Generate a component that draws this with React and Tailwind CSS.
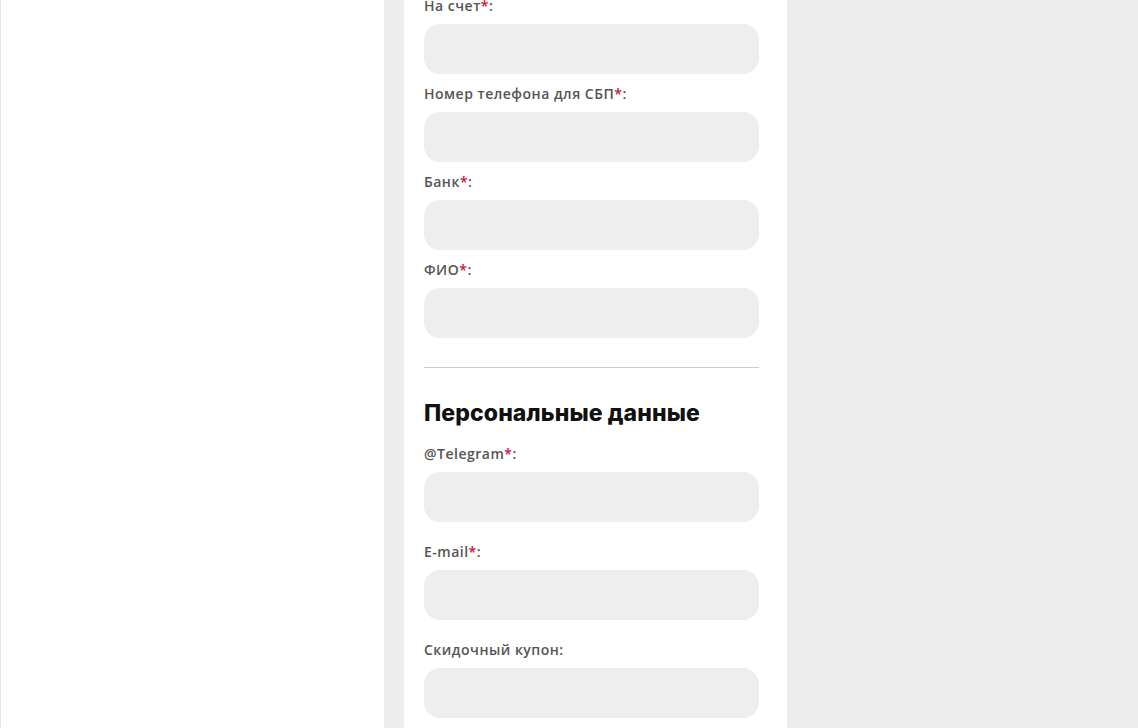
const bankFields = [
  { label: "На счет", required: true },
  { label: "Номер телефона для СБП", required: true },
  { label: "Банк", required: true },
  { label: "ФИО", required: true },
]

const personalFields = [
  { label: "@Telegram", required: true },
  { label: "E-mail", required: true },
  { label: "Скидочный купон", required: false },
]

function Field({ label, required, className = "" }) {
  return (
    <div className={`flex flex-col ${className}`}>
      <label className="mb-2 font-['Open_Sans','Noto_Sans',sans-serif] text-[14px] leading-[20px] font-semibold tracking-[0.5px] text-[#555555]">
        {label}
        {required ? <span className="text-[#d0103a]">*</span> : null}:
      </label>
      <input
        type="text"
        className="h-[50px] w-full rounded-[16px] bg-[#eeeeee] px-4 text-[15px] outline-none"
      />
    </div>
  )
}

export default function App() {
  return (
    <div className="flex h-[728px] w-[1138px] overflow-hidden bg-[#ededed] font-['Inter','Noto_Sans',sans-serif]">
      <aside className="h-full w-[384px] shrink-0 border-l border-[#e6e6e6] bg-white" />

      <main className="ml-[20px] h-full w-[383px] shrink-0 overflow-hidden bg-white pl-[20px] pr-[28px]">
        <div className="-mt-[4px] flex flex-col">
          <div className="flex flex-col gap-[10px]">
            {bankFields.map((f) => (
              <Field key={f.label} label={f.label} required={f.required} />
            ))}
          </div>

          <hr className="mt-[29px] border-0 border-t border-[#cccccc]" />

          <h2 className="mt-[31px] text-[23px] leading-[28px] font-extrabold tracking-[0.1px] text-[#111111]">
            Персональные данные
          </h2>

          <div className="mt-[17px] flex flex-col gap-[20px]">
            {personalFields.map((f) => (
              <Field key={f.label} label={f.label} required={f.required} />
            ))}
          </div>
        </div>
      </main>
    </div>
  )
}
